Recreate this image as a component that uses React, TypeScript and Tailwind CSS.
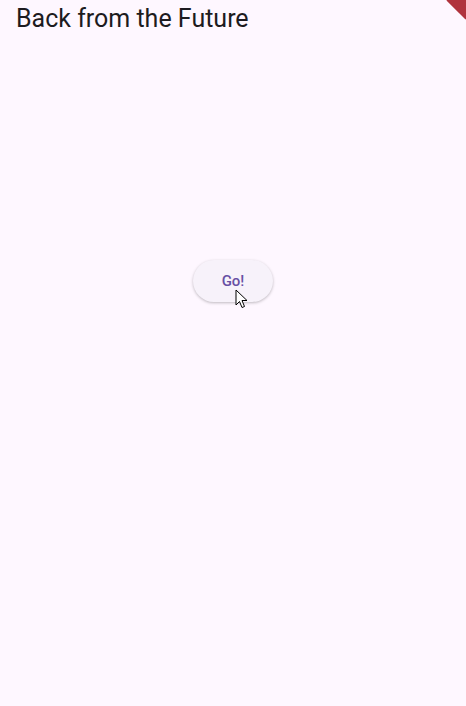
export default function App() {
  return (
    <main
      className="relative h-[706px] w-[466px] overflow-hidden bg-[#fef7ff] text-[#1d1b20]"
      style={{ fontFamily: 'Roboto, "Noto Sans", sans-serif' }}
    >
      <header className="flex h-[36px] items-center px-4">
        <h1 className="text-[25px] leading-none font-normal">Back from the Future</h1>
      </header>

      <div className="flex h-[490px] items-center justify-center">
        <div className="relative">
          <button className="h-[42px] w-[80px] rounded-full bg-[#f7f2fa] text-[15px] font-medium text-[#6750a4] shadow-[0_1px_3px_rgba(0,0,0,0.25)]">
            Go!
          </button>
          <svg
            className="absolute left-[42px] top-[29px]"
            width="13"
            height="20"
            viewBox="0 0 13 20"
          >
            <path d="M1 1 L1 16 L4.5 12.5 L7 18.5 L9.5 17.5 L7 11.5 L12 11.5 Z" fill="#fff" stroke="#000" strokeWidth="1" strokeLinejoin="round" />
          </svg>
        </div>
      </div>

      <div className="absolute right-[-13px] top-[-13px] h-[27px] w-[27px] rotate-45 bg-[#b0333d]" />
    </main>
  );
}
